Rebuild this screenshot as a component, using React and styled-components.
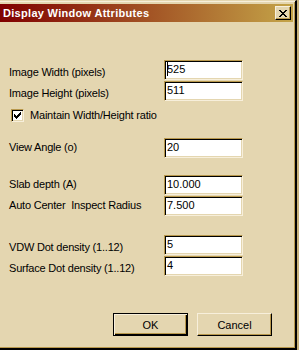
import React from 'react';
import styled, { createGlobalStyle, css } from 'styled-components';

const FACE = '#e4d6b0';
const LIGHT = '#f7efdb';
const SHADOW = '#b8984c';

const GlobalStyle = createGlobalStyle`
  html, body {
    margin: 0;
    padding: 0;
  }
  body {
    background: #c8b27c;
    overflow: hidden;
    font-family: "Liberation Sans", Arial, sans-serif;
    color: #000;
  }
`;

const Window = styled.div`
  box-sizing: border-box;
  width: 297px;
  height: 350px;
  display: flex;
  flex-direction: column;
  background: ${FACE};
  border-top: 1px solid ${FACE};
  border-right: 2px solid #000;
  border-bottom: 2px solid #000;
  box-shadow: inset 0 1px ${LIGHT}, inset -1px -1px ${SHADOW};
  padding: 3px 2px 0 0;
`;

const TitleBar = styled.div`
  height: 18px;
  display: flex;
  align-items: center;
  justify-content: space-between;
  padding: 0 2px 0 3px;
  background: linear-gradient(to right, #800000, #c4a448);
`;

const Title = styled.span`
  color: #fff;
  font-weight: bold;
  font-size: 11px;
  line-height: 13px;
  letter-spacing: 0.3px;
`;

const CloseButton = styled.div`
  box-sizing: border-box;
  width: 16px;
  height: 14px;
  display: flex;
  align-items: center;
  justify-content: center;
  background: ${FACE};
  border: 1px solid;
  border-color: ${LIGHT} #000 #000 ${LIGHT};
  box-shadow: inset -1px -1px ${SHADOW};
`;

const Content = styled.div`
  display: flex;
  flex-direction: column;
  padding-top: 38px;
  font-size: 11px;
`;

const Field = styled.div`
  display: grid;
  grid-template-columns: 155px 79px;
  align-items: start;
  padding-left: 9px;
  margin-top: ${p => p.$mt}px;
`;

const Label = styled.span`
  line-height: 13px;
  white-space: pre;
  letter-spacing: -0.2px;
  margin-top: ${p => p.$dy}px;
`;

const TextBox = styled.div`
  box-sizing: border-box;
  width: 79px;
  height: 20px;
  padding: 0 2px;
  background: #fff;
  border: 1px solid;
  border-color: ${SHADOW} ${LIGHT} ${LIGHT} ${SHADOW};
  box-shadow: inset 1px 1px #000, inset -1px -1px ${FACE};
  line-height: 16px;
  white-space: nowrap;
`;

const Caret = styled.span`
  display: inline-block;
  width: 1px;
  height: 15px;
  margin-right: -1px;
  vertical-align: -3px;
  background: #000;
`;

const CheckRow = styled.div`
  display: flex;
  align-items: center;
  gap: 6px;
  padding-left: 11px;
  margin-top: 8px;
`;

const CheckBox = styled.span`
  box-sizing: border-box;
  width: 13px;
  height: 13px;
  display: flex;
  align-items: center;
  justify-content: center;
  background: #fff;
  border: 1px solid;
  border-color: ${SHADOW} ${LIGHT} ${LIGHT} ${SHADOW};
  box-shadow: inset 1px 1px #000, inset -1px -1px ${FACE};
`;

const ButtonRow = styled.div`
  display: flex;
  gap: 9px;
  padding-left: 113px;
  margin-top: 37px;
`;

const Button = styled.div`
  box-sizing: border-box;
  width: 75px;
  height: 23px;
  display: flex;
  align-items: center;
  justify-content: center;
  background: ${FACE};
  border: 1px solid;
  ${p =>
    p.$default
      ? css`
          border-color: #000;
          box-shadow: inset 1px 1px ${LIGHT}, inset -1px -1px #000, inset -2px -2px ${SHADOW};
        `
      : css`
          border-color: ${LIGHT} #000 #000 ${LIGHT};
          box-shadow: inset -1px -1px ${SHADOW};
        `}
`;

const CloseGlyph = () => (
  <svg width="8" height="7" viewBox="0 0 8 7" shapeRendering="crispEdges">
    <path
      fill="#000"
      d="M0 0h2v1H0z M6 0h2v1H6z M1 1h2v1H1z M5 1h2v1H5z M2 2h4v1H2z M3 3h2v1H3z M2 4h4v1H2z M1 5h2v1H1z M5 5h2v1H5z M0 6h2v1H0z M6 6h2v1H6z"
    />
  </svg>
);

const CheckGlyph = () => (
  <svg width="7" height="7" viewBox="0 0 7 7" shapeRendering="crispEdges">
    <path
      fill="#000"
      d="M6 0h1v1H6z M5 1h2v1H5z M0 2h1v1H0z M4 2h3v1H4z M0 3h2v1H0z M3 3h3v1H3z M0 4h5v1H0z M1 5h3v1H1z M2 6h1v1H2z"
    />
  </svg>
);

const sizeFields = [
  { label: 'Image Width (pixels)', value: '525', mt: 0, dy: 6, caret: true },
  { label: 'Image Height (pixels)', value: '511', mt: 1, dy: 6 },
];

const otherFields = [
  { label: 'View Angle (o)', value: '20', mt: 16, dy: 3 },
  { label: 'Slab depth (A)', value: '10.000', mt: 17, dy: 3 },
  { label: 'Auto Center  Inspect Radius', value: '7.500', mt: 1, dy: 3 },
  { label: 'VDW Dot density (1..12)', value: '5', mt: 19, dy: 6 },
  { label: 'Surface Dot density (1..12)', value: '4', mt: 1, dy: 6 },
];

function FieldRow({ label, value, mt, dy, caret }) {
  return (
    <Field $mt={mt}>
      <Label $dy={dy}>{label}</Label>
      <TextBox>
        {caret && <Caret />}
        {value}
      </TextBox>
    </Field>
  );
}

export default function App() {
  return (
    <>
      <GlobalStyle />
      <Window>
        <TitleBar>
          <Title>Display Window Attributes</Title>
          <CloseButton>
            <CloseGlyph />
          </CloseButton>
        </TitleBar>
        <Content>
          {sizeFields.map(f => (
            <FieldRow key={f.label} {...f} />
          ))}
          <CheckRow>
            <CheckBox>
              <CheckGlyph />
            </CheckBox>
            <Label $dy={0}>Maintain Width/Height ratio</Label>
          </CheckRow>
          {otherFields.map(f => (
            <FieldRow key={f.label} {...f} />
          ))}
          <ButtonRow>
            <Button $default>OK</Button>
            <Button>Cancel</Button>
          </ButtonRow>
        </Content>
      </Window>
    </>
  );
}
